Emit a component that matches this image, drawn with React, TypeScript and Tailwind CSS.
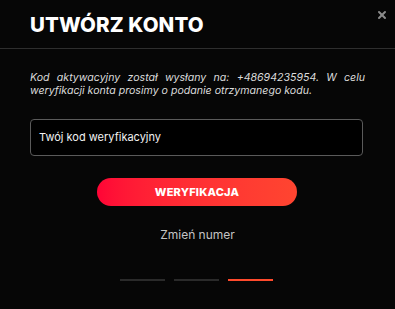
import { X } from 'lucide-react';

const font = { fontFamily: '"Inter", "Noto Sans", sans-serif' };

export default function App() {
  return (
    <div
      className="relative flex h-[309px] w-[395px] flex-col overflow-hidden bg-[#060606] text-white"
      style={font}
    >
      <div className="flex h-[49px] items-center border-b border-[#2e2e2e] px-[30px]">
        <h1 className="pt-[2px] text-[20.5px] font-extrabold leading-none tracking-[0.1px]">
          UTWÓRZ KONTO
        </h1>
      </div>
      <button
        type="button"
        className="absolute right-[7px] top-[9px] flex h-[12px] w-[12px] items-center justify-center text-[#8a8a8a]"
      >
        <X size={12} strokeWidth={4} />
      </button>

      <div className="flex flex-col px-[30px]">
        <p className="mt-[23px] text-justify text-[10.6px] italic leading-[12.5px] text-[#dcdcdc] [text-align-last:left]">
          Kod aktywacyjny został wysłany na: +48694235954. W celu weryfikacji konta prosimy o podanie
          otrzymanego kodu.
        </p>

        <div className="mt-[22px] flex h-[37px] w-[333px] items-center rounded-[4px] border border-[#5a5a5a] bg-black px-[8px]">
          <span className="text-[11px] text-[#f2f2f2]">Twój kod weryfikacyjny</span>
        </div>

        <div className="mt-[22px] flex justify-center pr-[1px]">
          <button
            type="button"
            className="flex h-[28px] w-[200px] items-center justify-center rounded-full bg-gradient-to-r from-[#ff0436] to-[#ff4530] text-[11px] font-extrabold tracking-[0.2px] text-white"
          >
            WERYFIKACJA
          </button>
        </div>

        <div className="mt-[21px] flex justify-center">
          <span className="text-[12px] leading-[16px] text-[#c4c4c4]">Zmień numer</span>
        </div>

        <div className="mt-[36px] flex justify-center gap-[9px] pr-[2px]">
          <div className="h-[2px] w-[45px] bg-[#2a2a2a]" />
          <div className="h-[2px] w-[45px] bg-[#2a2a2a]" />
          <div className="h-[2px] w-[45px] bg-[#ff4a2c]" />
        </div>
      </div>
    </div>
  );
}
